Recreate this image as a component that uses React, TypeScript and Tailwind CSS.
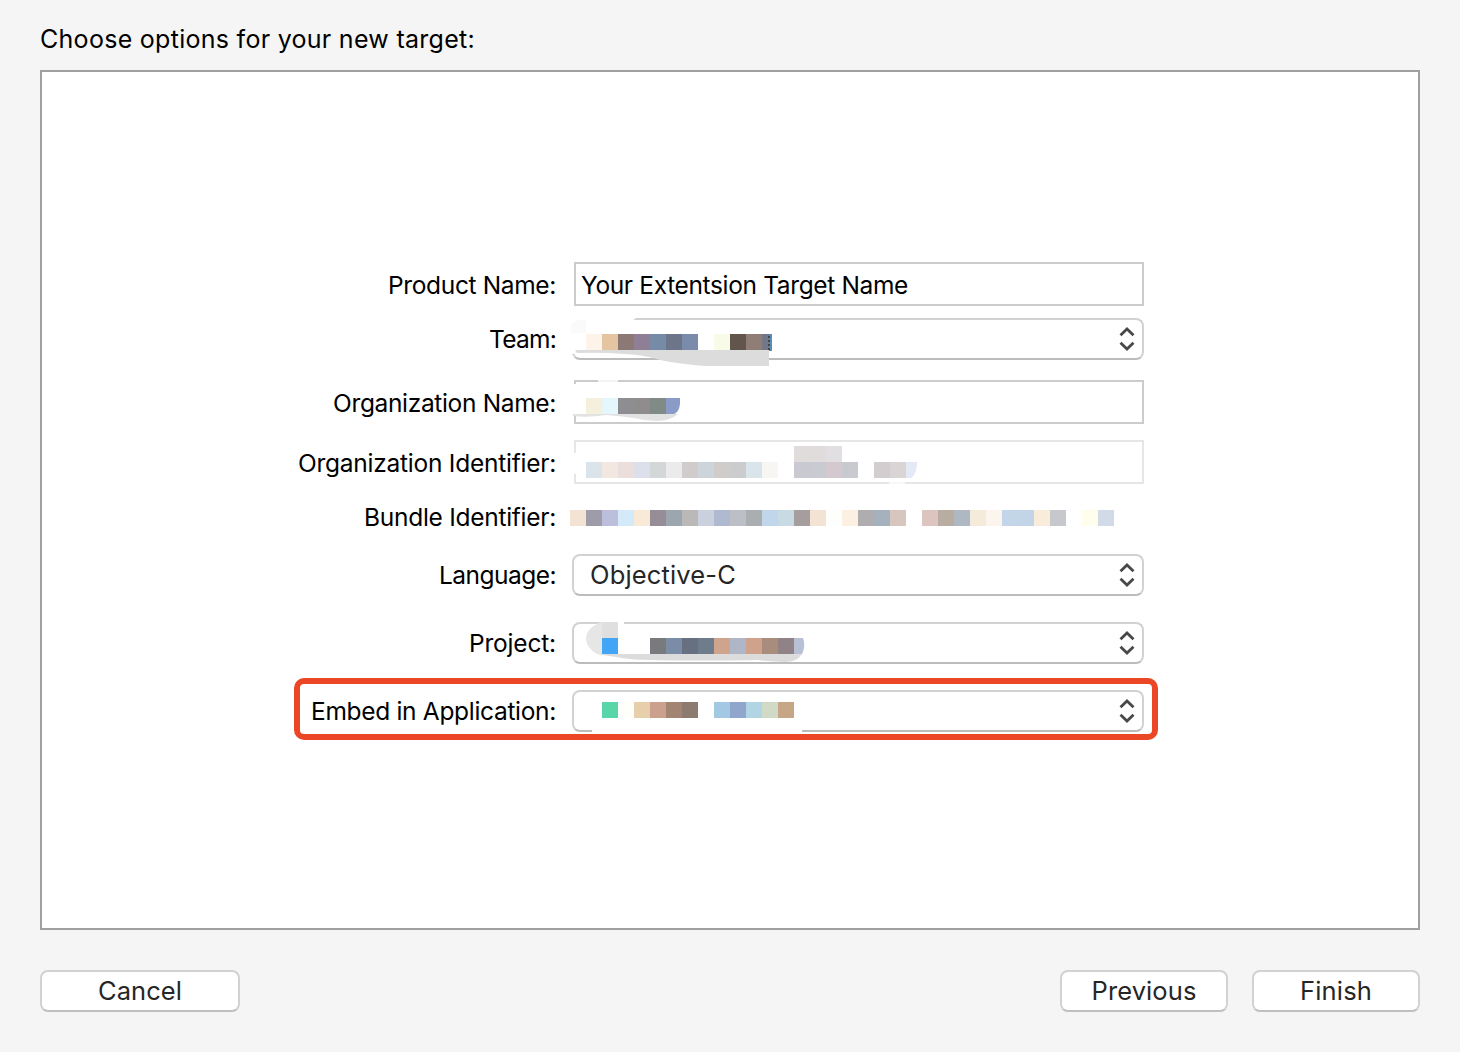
import type { ReactNode } from "react";

type Block = [x: number, color: string];

/** A strip of 16px mosaic blocks. */
function Mosaic({ y, blocks }: { y: number; blocks: Block[] }) {
  return (
    <g shapeRendering="crispEdges">
      {blocks.map(([x, color]) => (
        <rect key={x} x={x} y={y} width={16} height={16} fill={color} />
      ))}
    </g>
  );
}

/** Redaction drawn over a field. */
function Redaction({ top, children }: { top: number; children: ReactNode }) {
  return (
    <svg
      className="pointer-events-none absolute -left-3 top-0 h-12 w-[600px]"
      viewBox={`560 ${top} 600 48`}
      aria-hidden="true"
    >
      {children}
    </svg>
  );
}

function Row({ label, width, className, children }: { label: string; width: number; className: string; children: ReactNode }) {
  return (
    <div className={`relative flex items-center ${className}`}>
      <div className="flex w-[258px] shrink-0 justify-end">
        <Fit width={width}>{label}</Fit>
      </div>
      <div className="relative ml-4 h-full w-[572px]">{children}</div>
    </div>
  );
}

/** Text fitted to a fixed advance width. */
function Fit({ width, children }: { width: number; children: string }) {
  return (
    <span
      className="inline-block whitespace-nowrap"
      ref={(el) => {
        if (!el) return;
        el.style.letterSpacing = "0px";
        const natural = el.getBoundingClientRect().width;
        const spacing = (width - natural) / children.length;
        el.style.letterSpacing = `${spacing}px`;
      }}
    >
      {children}
    </span>
  );
}

function TextField({ faint = false, children }: { faint?: boolean; children?: ReactNode }) {
  return (
    <div className={`ml-0.5 flex h-11 items-center border-2 bg-white pl-[5px] pt-0.5 ${faint ? "border-[#e6e6e6]" : "border-[#cccccc]"}`}>
      {children}
    </div>
  );
}

function Popup({ children }: { children?: ReactNode }) {
  return (
    <div className="flex h-[42px] items-center justify-between rounded-[8px] border-2 border-[#d2d2d2] border-b-[#bcbcbc] bg-white pl-4 pr-[7px] text-[25.500px] text-[#262626]">
      <span>{children}</span>
      <svg className="h-6 w-4" viewBox="0 0 16 24" fill="none" stroke="#484848" strokeWidth="2.8">
        <path d="M1.500 8.200 8 2l6.500 6.200M1.500 15.800 8 22l6.500-6.200" />
      </svg>
    </div>
  );
}

function Button({ children, width, className }: { children: string; width: number; className: string }) {
  return (
    <button
      className={`flex h-[42px] items-center justify-center rounded-[8px] border-2 border-[#d2d2d2] border-b-[#bfbfbf] bg-white text-[25.500px] text-[#262626] ${className}`}
    >
      <Fit width={width}>{children}</Fit>
    </button>
  );
}

export default function App() {
  return (
    <div className="flex h-[1052px] w-[1460px] flex-col bg-[#f5f5f5] px-10 font-['Inter',sans-serif] text-[24.500px] font-[420] leading-8 text-black">
      <h1 className="mt-[23px] h-[47px] text-[25px] font-[420]">
        <Fit width={435}>Choose options for your new target:</Fit>
      </h1>

      <main className="h-[860px] border-2 border-[#a0a0a0] bg-white pl-[256px] pt-[190px]">
        <Row label="Product Name:" width={168} className="h-11 [&>div:first-child]:pt-0.5">
          <TextField>
            <Fit width={327}>Your Extentsion Target Name</Fit>
          </TextField>
        </Row>

        <Row label="Team:" width={67} className="mt-3 h-[42px]">
          <Popup />
          <Redaction top={318}>
            <path d="M570 316H640Q632 319 632 324V350H576L574 354H570Z" fill="#fff" />
            <path d="M571 333V325Q575 319 586 319V333Z" fill="#fafafa" />
            <rect x={586} y={326} width={186} height={25} fill="#fff" />
            <path d="M575 350H769V366H705Q680 364 660 360Q645 355 625 354Q600 352 577 353Z" fill="#dcdcdc" />
            <Mosaic
              y={334}
              blocks={[
                [586, "#fdf3e8"], [602, "#e5c5a0"], [618, "#8c7875"], [634, "#8f7f96"],
                [650, "#768ba5"], [666, "#6d758a"], [682, "#7b8caa"], [714, "#f9fbe9"],
                [730, "#62564c"], [746, "#907d75"],
              ]}
            />
            <rect x={762} y={334} width={7} height={16} fill="#727887" />
            <rect x={769} y={334} width={3} height={17} fill="#568cb8" />
            <path d="M769 336V351" stroke="#444" strokeWidth="2" strokeDasharray="2 2" />
          </Redaction>
        </Row>

        <Row label="Organization Name:" width={223} className="mt-5 h-11 [&>div:first-child]:pt-0.5">
          <TextField />
          <Redaction top={380}>
            <path d="M572 384H586V416H572Z" fill="#fff" />
            <path d="M598 380h20v2h-20z" fill="#f3f3f3" />
            <path d="M573 414H678Q670 421 657 421Q645 421 634 418Q620 416 606 415Q588 418 573 416Z" fill="#e2e2e2" />
            <Mosaic
              y={398}
              blocks={[[586, "#f5f0dc"], [602, "#e3f7fd"], [618, "#8e8d91"], [634, "#8e8c8d"], [650, "#818b85"]]}
            />
            <path d="M666 398H680V404Q679 412 674 414H666Z" fill="#8b9bc8" />
          </Redaction>
        </Row>

        <Row label="Organization Identifier:" width={258} className="mt-4 h-11 [&>div:first-child]:pt-0.5">
          <TextField faint />
          <Redaction top={440}>
            <path d="M572 453H580V474H572Z" fill="#fff" />
            <path d="M889 482h16v2h-16z" fill="#f7f7f7" />
            <rect x={794} y={446} width={32} height={16} fill="#e1dcdc" />
            <rect x={826} y={446} width={16} height={16} fill="#e1dfe2" />
            <Mosaic
              y={462}
              blocks={[
                [586, "#dae4ea"], [602, "#f2e8e1"], [618, "#ebdedd"], [634, "#dbe0eb"],
                [650, "#d3d7d7"], [666, "#ebebeb"], [682, "#d1cbcc"], [698, "#ced5da"],
                [714, "#d0ccca"], [730, "#caccce"], [746, "#dae4eb"], [762, "#f8f6f2"],
                [794, "#c9c9d1"], [810, "#cacad2"], [826, "#d3c9cf"], [842, "#c9cad0"],
                [874, "#d2cdce"], [890, "#dad4d5"],
              ]}
            />
            <path d="M906 462H917Q917 474 911 478H906Z" fill="#e3e9f5" />
          </Redaction>
        </Row>

        <Row label="Bundle Identifier:" width={192} className="mt-3 h-[42px]">
          <Redaction top={496}>
            <Mosaic
              y={510}
              blocks={[
                [570, "#f3e3d2"], [586, "#9f9caa"], [602, "#bbbfdb"], [618, "#d5eaf8"],
                [634, "#f9ead8"], [650, "#978d96"], [666, "#9ba6af"], [682, "#bbb9b7"],
                [698, "#cad0dd"], [714, "#afbad1"], [730, "#bcc0c6"], [746, "#abaeb0"],
                [762, "#c1d6eb"], [778, "#c8dae3"], [794, "#a69e9e"], [810, "#f3e3d2"],
                [826, "#fdfffc"], [842, "#fcf0e2"], [858, "#afadb0"], [874, "#a5b2be"],
                [890, "#d6c6bd"], [922, "#dcc5be"], [938, "#b9aca1"], [954, "#adb8c2"],
                [970, "#f5ebdb"], [986, "#fcf5ed"], [1002, "#c2d5e9"], [1018, "#c2d5e7"],
                [1034, "#faecda"], [1050, "#c6c8cd"], [1082, "#fffdec"], [1098, "#d2d9e7"],
              ]}
            />
          </Redaction>
        </Row>

        <Row label="Language:" width={117} className="mt-4 h-[42px]">
          <Popup>
            <Fit width={146}>Objective-C</Fit>
          </Popup>
        </Row>

        <Row label="Project:" width={87} className="mt-[26px] h-[42px]">
          <Popup />
          <Redaction top={622}>
            <path d="M602 622H618V654H597Q586 648 586 638Q587 627 602 622Z" fill="#e6e6e6" />
            <path d="M602 622H618V638H602Z" fill="#dfdfdf" />
            <path d="M618 620h6v4h-6z" fill="#fff" />
            <path d="M597 654H802Q797 662 785 662Q770 662 758 660Q700 661 650 660Q630 660 616 657Z" fill="#dcdcdc" />
            <Mosaic
              y={638}
              blocks={[
                [602, "#42a5f5"], [650, "#787a7d"], [666, "#7b8da6"], [682, "#677080"],
                [698, "#6f7c8b"], [714, "#cfa48d"], [730, "#afb6c8"], [746, "#cfa38b"],
                [762, "#a88d7d"], [778, "#918287"],
              ]}
            />
            <path d="M794 638H803Q806 646 802 654H794Z" fill="#b8c0d6" />
          </Redaction>
        </Row>

        <Row label="Embed in Application:" width={245} className="mt-[26px] h-[42px]">
          <Popup />
          <Redaction top={690}>
            <path d="M592 728H802V734H592Z" fill="#fff" />
            <Mosaic
              y={702}
              blocks={[
                [602, "#58d6aa"], [618, "#fefffb"], [634, "#e6cfaa"], [650, "#cba08d"],
                [666, "#a28473"], [682, "#8d7b70"], [714, "#a2c8e4"], [730, "#91a6cd"],
                [746, "#b1d5e3"], [762, "#d1dac6"], [778, "#c5a787"],
              ]}
            />
          </Redaction>
          <div className="pointer-events-none absolute -left-[278px] -top-3 h-[62px] w-[864px] rounded-[10px] border-[6px] border-[#eb4726]" />
        </Row>
      </main>

      <footer className="mt-10 flex">
        <Button width={84} className="w-[200px]">Cancel</Button>
        <Button width={105} className="ml-auto w-[168px]">Previous</Button>
        <Button width={72} className="ml-6 w-[168px]">Finish</Button>
      </footer>
    </div>
  );
}
